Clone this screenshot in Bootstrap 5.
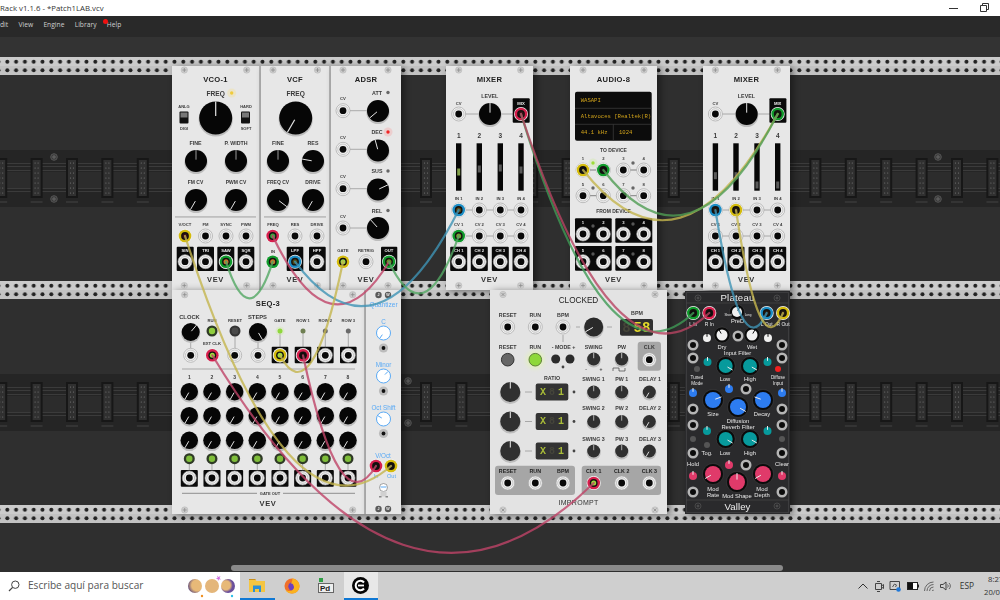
<!DOCTYPE html>
<html lang="en">
<head>
    <meta charset="UTF-8">
    <title>Rack v1.1.6 - *Patch1LAB.vcv</title>
    <link href="https://cdn.jsdelivr.net/npm/bootstrap@5.3.0/dist/css/bootstrap.min.css" rel="stylesheet">
    <style>
        body { background: #2f2f2f; font-family: "Liberation Sans", Arial, sans-serif; }
        .win-title { height: 16px; background: #fff; color: #333; font: 7.8px/16px "Open Sans", sans-serif; }
        .win-btn { width: 31px; }
        .menu-bar { height: 21px; background: #292929; color: #cfcfcf; font: 6.7px/17px "Open Sans", sans-serif; gap: 10.3px; }
        .help-dot { width: 5px; height: 5px; left: 103px; top: 2.5px; background: #f01010; }
        .rack-canvas { background: #2f2f2f; filter: blur(.35px); }
        .rack-top { height: 20px; background: #333; }
        .rack-mod { background: #e7e7e7; color: #222; box-shadow: 3px 1px 7px rgba(0,0,0,.45); }
        .rack-mod.has-edge { border-right: 2px solid #b4b4b4; }
        .rack-mod.is-dark { background: #2a2a2c; color: #eee; outline: 1px solid #3c3c3e; outline-offset: -2px; }
        .rack-mod.is-clocked { background: #e3e3e3; }
        .mod-title { font-size: 7.6px; font-weight: 700; line-height: 12px; margin-top: 8px; letter-spacing: .3px; }
        .is-clocked .mod-title { font-weight: 400; font-size: 8.2px; margin-top: 5px; letter-spacing: 0; }
        .is-dark .mod-title { font-weight: 400; font-size: 9.6px; margin-top: 0; line-height: 13px; letter-spacing: .2px; }
        .is-quant .mod-title { color: #5aaaf5; font-size: 6.5px; font-weight: 400; margin-top: 9px; letter-spacing: 0; }
        .mod-foot { font-size: 7.5px; font-weight: 700; line-height: 10px; margin-bottom: 5px; letter-spacing: .6px; color: #333; }
        .is-dark .mod-foot { color: #eee; font-weight: 400; font-size: 9.6px; line-height: 13px; margin-bottom: 1px; letter-spacing: .1px; }
        .is-clocked .mod-foot { font-weight: 400; font-size: 7px; margin-bottom: 6px; letter-spacing: .3px; }
        .scroll-track { height: 7px; background: #2f2f2f; }
        .scroll-thumb { width: 552px; height: 6px; margin-left: 231px; background: #8a8a8a; }
        .task-bar { height: 28px; background: #cfcfcf; color: #333; font-family: "Open Sans", sans-serif; }
        .search-box { width: 240px; background: #fff; font-size: 10.1px; color: #555; }
        .app-btn { width: 34.5px; height: 28px; }
        .app-btn.is-open { border-bottom: 2px solid #0f78d4; }
        .app-btn.is-active { background: #e8e8e8; }
        .tray-icon { width: 16.6px; }
        .tray-lang { width: 30px; padding-right: 4px; font-size: 8.4px; }
        .tray-clock { width: 16px; font-size: 7.7px; line-height: 13px; white-space: nowrap; }
        svg text { font-family: "Liberation Sans", Arial, sans-serif; }
        svg .mono { font-family: "Liberation Mono", monospace; }
    </style>
</head>
<body class="vh-100 d-flex flex-column overflow-hidden">

    <div class="win-title d-flex justify-content-between flex-shrink-0">
        <span>Rack v1.1.6 - *Patch1LAB.vcv</span>
        <div class="d-flex align-items-center">
            <span class="win-btn d-flex justify-content-center">
                <svg width="10" height="10"><path d="M0 5.5h9" stroke="#333"/></svg>
            </span>
            <span class="win-btn d-flex justify-content-center">
                <svg width="10" height="10"><path d="M.5 2.5h6v6h-6zM2.5 2.5v-2h6v6h-2" stroke="#333" fill="none"/></svg>
            </span>
        </div>
    </div>

    <div class="menu-bar d-flex position-relative flex-shrink-0">
        <span>dit</span><span>View</span><span>Engine</span><span>Library</span><span>Help</span>
        <span class="help-dot position-absolute rounded-circle"></span>
    </div>

    <div id="canvas" class="rack-canvas position-relative flex-grow-1 overflow-hidden">
        <div class="rack-top"></div>
    </div>

    <div class="scroll-track flex-shrink-0"><div class="scroll-thumb rounded-pill"></div></div>

    <div class="task-bar d-flex flex-shrink-0">
        <div class="search-box d-flex align-items-center">
            <svg class="mx-2" width="12" height="12" viewBox="0 0 12 12"><circle cx="7.3" cy="4.7" r="3.7" fill="none" stroke="#444"/><path d="M4.6 7.4 1 11" stroke="#444" stroke-width="1.2"/></svg>
            <span>Escribe aquí para buscar</span>
            <svg class="ms-auto" width="52" height="28" viewBox="0 0 52 28">
                <defs>
                    <radialGradient id="moonA" cx=".65" cy=".45" r=".7"><stop offset=".55" stop-color="#e7b978"/><stop offset="1" stop-color="#52407c"/></radialGradient>
                    <radialGradient id="moonB" cx=".35" cy=".45" r=".7"><stop offset=".45" stop-color="#e7b978"/><stop offset=".7" stop-color="#6a4f9c"/></radialGradient>
                </defs>
                <circle cx="7" cy="14" r="7" fill="url(#moonA)"/>
                <circle cx="24" cy="14" r="7" fill="#e4b67a"/>
                <circle cx="40" cy="14" r="7" fill="url(#moonB)"/>
                <path d="M29 3.5l1.5 1.5 2-1-1 2 1.5 1.5-2-.3-1 1.8-.3-2-2-.5 2-.8z" fill="#d070e0"/>
                <circle cx="14" cy="24" r="1.2" fill="#f09020"/><circle cx="44" cy="24" r="1.2" fill="#30c0e8"/>
            </svg>
        </div>
        <div class="app-btn is-open d-flex align-items-center justify-content-center">
            <svg width="16" height="14" viewBox="0 0 16 14"><path d="M0 1h6l1.5 2H16v11H0z" fill="#f4c542"/><path d="M0 1h6l1 1H0z" fill="#c98f1a"/><path d="M4 7.5h8V14h-2v-3H6v3H4z" fill="#2a8fd8"/></svg>
        </div>
        <div class="app-btn d-flex align-items-center justify-content-center">
            <svg width="16" height="16" viewBox="0 0 16 16"><circle cx="8" cy="8" r="7.5" fill="#f0702a"/><circle cx="8.5" cy="8.5" r="4.2" fill="#6d3fc0"/><path d="M8 .5c5 .5 7.5 4 7.5 7.5 0 4-3 7.5-7.5 7.5-3 0-5.5-1.5-6.8-4 2 1.8 5.5 2 7.3.5 1.5-1 2-3 1-4.5C9 5.500 7.500 5.300 6.500 5.700 8 4 9 2 8 .5z" fill="#fbb21e"/></svg>
        </div>
        <div class="app-btn d-flex align-items-center justify-content-center">
            <svg width="17" height="17" viewBox="0 0 17 17"><rect x="1" y="0" width="4" height="4" fill="#2f9e44"/><rect x=".5" y="5.5" width="15" height="9" fill="#eee" stroke="#666"/><text x="2" y="12.5" font-size="8" font-weight="700" fill="#222">Pd</text></svg>
        </div>
        <div class="app-btn is-open is-active d-flex align-items-center justify-content-center">
            <svg width="17" height="17" viewBox="0 0 17 17"><circle cx="8.5" cy="8.5" r="8.5" fill="#050505"/><path d="M12 5.5A4.7 4.7 0 1 0 12 11.5" fill="none" stroke="#fff" stroke-width="2"/><path d="M6 8.5h6" stroke="#fff" stroke-width="1.8"/></svg>
        </div>
        <div class="ms-auto d-flex align-items-center">
            <span class="tray-icon d-flex justify-content-center"><svg width="10" height="6"><path d="M.5 5.5 5 1l4.500 4.500" fill="none" stroke="#333"/></svg></span>
            <span class="tray-icon d-flex justify-content-center"><svg width="10" height="11"><path d="M1.5 2.5h6v6h-6zM3 .5h3M3 10.5h3M7.5 5l2-1.5v4L7.5 6" fill="none" stroke="#444"/></svg></span>
            <span class="tray-icon d-flex justify-content-center"><svg width="13" height="12"><path d="M1 1.5h9.5v8H1z" fill="none" stroke="#444"/><path d="M3.5 7l2-3 2 1-1 2" fill="none" stroke="#555"/><circle cx="9.5" cy="9.5" r="2.3" fill="#1f78d8"/></svg></span>
            <span class="tray-icon d-flex justify-content-center"><svg width="12" height="8"><rect x=".5" y=".5" width="10" height="7" fill="#fff" stroke="#222"/><rect x="1" y="1" width="5" height="6" fill="#111"/><rect x="10.5" y="2.5" width="1.5" height="3" fill="#222"/></svg></span>
            <span class="tray-icon d-flex justify-content-center"><svg width="12" height="11"><path d="M1.5 10a9 9 0 0 1 9-9M4 10a6.5 6.5 0 0 1 6.5-6.5M6.5 10a4 4 0 0 1 4-4" fill="none" stroke="#666"/><path d="M9 10a1.5 1.5 0 0 1 1.500-1.500V10z" fill="#666"/></svg></span>
            <span class="tray-icon d-flex justify-content-center"><svg width="12" height="10"><path d="M.5 3.500h2.500L6 1v8L3 6.500H.5z" fill="none" stroke="#444"/><path d="M7.500 3.500a2 2 0 0 1 0 3M9 2a4 4 0 0 1 0 6" fill="none" stroke="#666"/></svg></span>
            <span class="tray-lang text-center">ESP</span>
            <span class="tray-clock"><span class="d-block ms-1">8:27</span><span class="d-block">20/0</span></span>
        </div>
    </div>

    <script>
        const canvas = document.getElementById('canvas');
        const TOP = 37;
        const wrap = (body, cls = '') => `<svg class="position-absolute top-0 start-0 ${cls}" width="1000" height="528" viewBox="0 ${TOP} 1000 528">${body}</svg>`;

        // rack background: rails, bands, connectors
        let bg = `<defs><pattern id="holes" width="8.8" height="18" patternUnits="userSpaceOnUse" x="3" y="57">
            <rect width="8.8" height="9" fill="#cbcbcb"/><rect y="9" width="8.8" height="9" fill="#c2c2c2"/>
            <circle cx="4.3" cy="4.7" r="2" fill="#222"/><circle cx="4.3" cy="13.3" r="2" fill="#222"/></pattern></defs>`;
        [57, 281, 505].forEach(y => {
            bg += `<g transform="translate(0 ${y - 57})"><rect x="0" y="57" width="1000" height="18" fill="url(#holes)"/></g>`;
        });
        [150, 374].forEach(y => {
            bg += `<rect x="0" y="${y}" width="1000" height="57" fill="#252525"/>`;
            bg += `<rect x="0" y="${y + 22}" width="1000" height="17" fill="#2c2c2c"/>`;
            [13, 16, 20, 38, 41].forEach(d => bg += `<rect x="0" y="${y + d}" width="1000" height="1" fill="#3b3b3b"/>`);
            for (let x = 1.2; x < 1000; x += 35.4) {
                bg += `<rect x="${x - 6}" y="${y + 8}" width="12" height="40" fill="#171717"/><rect x="${x - 4}" y="${y + 10}" width="8" height="36" fill="#303030"/>`;
                for (let k = 0; k < 7; k++) bg += `<circle cx="${x - 1.5}" cy="${y + 13 + k * 5}" r=".6" fill="#777"/><circle cx="${x + 1.5}" cy="${y + 13 + k * 5}" r=".6" fill="#777"/>`;
                bg += `<rect x="${x - 6}" y="${y + 51.5}" width="12" height="1" fill="#444"/>`;
            }
        });
        const rackScrew = (x, y) => bg += `<circle cx="${x}" cy="${y}" r="3.3" fill="#3a3a3a" stroke="#555"/><path d="M${x - 2} ${y}h4M${x} ${y - 2}v4" stroke="#666"/>`;
        [[54, 157], [54, 199], [938, 157], [938, 199], [408, 381], [408, 423]].forEach(p => rackScrew(...p));
        canvas.insertAdjacentHTML('beforeend', wrap(bg));

        // module panels
        const modules = [
            ['VCO-1', 172, 66, 89, 224, 'has-edge', 'VEV'],
            ['VCF', 261, 66, 70, 224, 'has-edge', 'VEV'],
            ['ADSR', 331, 66, 70, 224, '', 'VEV'],
            ['MIXER', 446, 66, 87, 224, '', 'VEV'],
            ['AUDIO-8', 570, 66, 87, 224, '', 'VEV'],
            ['MIXER', 703, 66, 87, 224, '', 'VEV'],
            ['SEQ-3', 172, 290, 194, 224, 'has-edge', 'VEV'],
            ['Quantizer', 366, 290, 35, 224, 'is-quant', ''],
            ['CLOCKED', 490, 290, 177, 224, 'is-clocked', 'IMPROMPT'],
            ['Plateau', 685, 291, 105, 223, 'is-dark', 'Valley']
        ];
        modules.forEach(([name, x, y, w, h, cls, foot]) => {
            canvas.insertAdjacentHTML('beforeend',
                `<div class="rack-mod ${cls} position-absolute d-flex flex-column justify-content-between text-center" style="left:${x}px;top:${y - TOP}px;width:${w}px;height:${h}px">
                    <div class="mod-title">${name}</div><div class="mod-foot">${foot}</div></div>`);
        });

        // controls on the panels
        let o = '<defs><radialGradient id="runGlow"><stop offset=".4" stop-color="#e3f2b8"/><stop offset="1" stop-color="#e3e3e3" stop-opacity="0"/></radialGradient></defs>';
        const T = (x, y, t, sz = 5.5, c = '#3a3a3a', w = 600) => o += `<text x="${x}" y="${y}" font-size="${sz}" fill="${c}" font-weight="${w}" text-anchor="middle" dominant-baseline="central">${t}</text>`;
        const L = (x1, y1, x2, y2, c = '#9a9a9a', w = 0.8) => o += `<line x1="${x1}" y1="${y1}" x2="${x2}" y2="${y2}" stroke="${c}" stroke-width="${w}"/>`;
        const B = (x1, y1, x2, y2, c = '#0a0a0a', r = 1) => o += `<rect x="${x1}" y="${y1}" width="${x2 - x1}" height="${y2 - y1}" rx="${r}" fill="${c}"/>`;
        const C = (x, y, r, c, extra = '') => o += `<circle cx="${x}" cy="${y}" r="${r}" fill="${c}" ${extra}/>`;
        const screw = (x, y) => { C(x, y, 3.2, '#cdcdcd', 'stroke="#b5b5b5" stroke-width=".5"'); o += `<path d="M${x - 2} ${y}h4M${x} ${y - 2}v4" stroke="#8c8c8c" stroke-width=".8"/>`; };
        const screwX = (x, y) => { C(x, y, 3.2, '#cdcdcd', 'stroke="#b5b5b5" stroke-width=".5"'); o += `<path d="M${x - 1.5} ${y - 1.5}l3 3M${x + 1.5} ${y - 1.5}l-3 3" stroke="#8c8c8c" stroke-width=".8"/>`; };
        const screws = (x1, x2, y1 = 70, y2 = 285.6, f = screw) => [x1, x2].forEach(x => { f(x, y1); f(x, y2); });
        const knob = (x, y, r, a, body = '#060606', line = '#e4e4e4', from = 0.12) => {
            C(x, y + 1.5, r + .6, '#bdbdbd');
            C(x, y, r, body);
            const s = Math.sin(a * Math.PI / 180), c = -Math.cos(a * Math.PI / 180);
            L(x + s * r * from, y + c * r * from, x + s * r, y + c * r, line, r > 12 ? 1.2 : 1);
        };
        const port = (x, y) => {
            C(x, y, 7, '#f3f3f3', 'stroke="#a6a6a6" stroke-width=".7"');
            C(x, y, 5.3, '#efefef', 'stroke="#b4b4b4" stroke-width=".7"');
            C(x, y, 3.4, '#090909');
        };
        const plug = (x, y, col, core = '#111') => {
            C(x, y, 7, '#efefef');
            C(x, y, 6.3, col);
            C(x, y, 3.9, '#14110e');
            C(x, y, 2.5, core);
        };
        const led = (x, y, c, glow) => { if (glow) C(x, y, 4.5, glow, 'opacity=".35"'); C(x, y, 1.7, c); };
        const Y = '#d4bb0c', G = '#0f9a2b', R = '#d61e4c', U = '#1a8cc4';
        const box = (x1, x2, y1, y2) => B(x1, y1, x2, y2);

        // VCO-1
        screws(184.3, 246.7);
        T(215.7, 93, 'FREQ', 6.6); led(231.7, 93, '#f0cb3c', '#f5e08a');
        knob(215.7, 118, 16.5, 0);
        T(184, 106.7, 'ANLG', 4); T(184, 128.5, 'DIGI', 4); T(246, 106.7, 'HARD', 4); T(246, 128.5, 'SOFT', 4);
        [184, 245.5].forEach(x => { B(x - 4.5, 111.5, x + 4.5, 123.5, '#111', 1); B(x - 3.5, 112.5, x + 3.5, 117.5, '#777', 0); });
        T(195.5, 143, 'FINE', 5.3); T(236, 143, 'P. WIDTH', 5.3);
        knob(196, 161, 11, 0, undefined, '#9a9a9a'); knob(236, 161, 11, 0, undefined, '#9a9a9a');
        T(195.5, 181.5, 'FM CV', 5); T(236, 181.5, 'PWM CV', 5);
        knob(196, 200, 11, -150); knob(236, 200, 11, -150);
        B(175, 216, 256, 217.8, '#bfbfbf', 0);
        ['V/OCT', 'FM', 'SYNC', 'PWM'].forEach((t, i) => T([185, 205.5, 226, 246][i], 224.5, t, 4.2));
        plug(185, 236, Y, '#3a0d18'); port(205.5, 236); port(226, 236); port(246, 236);
        [[176.7, 193.7, 'SIN', 185], [197, 214, 'TRI', 205.5], [217.3, 234.3, 'SAW', 226], [237.7, 254.3, 'SQR', 246]].forEach(([a, b, t, x]) => {
            box(a, b, 246.7, 271); T(x, 250.5, t, 4.2, '#eee'); port(x, 261.7);
        });
        plug(226, 261.7, G, '#c9772b');

        // VCF
        screws(273, 317.5);
        T(295.7, 93, 'FREQ', 6.6); knob(295.7, 118, 16.5, -150);
        T(278, 143, 'FINE', 5.3); T(313, 143, 'RES', 5.3);
        knob(278, 161, 11, 0, undefined, '#9a9a9a'); knob(313, 161, 11, -80);
        T(278, 181.5, 'FREQ CV', 5); T(313, 181.5, 'DRIVE', 5);
        knob(278, 200, 11, 127); knob(313, 200, 11, -150);
        B(264, 216, 326, 217.8, '#bfbfbf', 0);
        T(273, 224.5, 'FREQ', 4.2); T(295, 224.5, 'RES', 4.2); T(317, 224.5, 'DRIVE', 4.2);
        plug(272.7, 236, R, '#3ea33f'); port(295, 236); port(317, 236);
        T(273, 251, 'IN', 4.2); plug(272.7, 261.7, G, '#c9772b');
        box(286.7, 303.3, 246.7, 271); box(309, 325.7, 246.7, 271);
        T(295, 250.5, 'LPF', 4.2, '#eee'); T(317, 250.5, 'HPF', 4.2, '#eee');
        plug(295, 261.7, U, '#514a12'); port(317, 261.7);

        // ADSR
        screws(343, 388);
        [['ATT', 92.5, '#666'], ['DEC', 132, '#f02424'], ['SUS', 171, '#666'], ['REL', 210.5, '#666']].forEach(([t, y, c]) => { T(377, y, t, 5.3); led(388, y, c, c[1] == 'f' ? '#f5a0a0' : null); });
        [[110.7, 111, -130], [149.3, 150.5, -15], [188.7, 189.5, 65], [228, 228, -42]].forEach(([py, ky, a]) => {
            T(343, py - 12, 'CV', 4.2); L(343, py, 378, py); port(343, py); knob(378, ky, 11, a);
        });
        T(343, 250.5, 'GATE', 4.2); T(366, 250.5, 'RETRIG', 4.2);
        box(381, 397.3, 246.7, 271); T(389, 250.5, 'OUT', 4.2, '#eee');
        plug(343, 261.7, Y, '#9ed64c'); port(366, 261.7); plug(389, 261.7, G, '#6c8e22');

        // MIXER, both copies
        const mixer = (dx, handles, plugs) => {
            const xs = [458.7, 479.3, 500.3, 521].map(v => v + dx);
            screws(458.7 + dx, 520.7 + dx);
            T(489.7 + dx, 96, 'LEVEL', 5.3); T(458.7 + dx, 103, 'CV', 4.2);
            L(xs[0], 114, xs[3], 114);
            port(xs[0], 114); knob(490 + dx, 114, 11, 0);
            box(512.7 + dx, 529.7 + dx, 98.3, 122.7); T(xs[3], 103, 'MIX', 4.2, '#eee');
            xs.forEach((x, i) => {
                T(x, 135.7, i + 1, 6.5);
                B(x - 2.7, 143.3, x + 2.7, 190.7, '#070707', 0);
                B(x - 1.5, handles[i] - 3.5, x + 1.5, handles[i] + 3.5, handles[i] === 172 ? '#82a04a' : '#595959', 0);
                T(x, 198, 'IN ' + (i + 1), 4.2); T(x, 224.3, 'CV ' + (i + 1), 4.2);
                if (i < 3) { L(x, 210, xs[i + 1], 210); L(x, 236, xs[i + 1], 236); }
            });
            xs.forEach((x, i) => {
                port(x, 210); port(x, 236);
                box(x - 8.5, x + 8.5, 246.7, 271); T(x, 250.5, 'CH ' + (i + 1), 4.2, '#eee'); port(x, 261.7);
            });
            plugs();
        };
        mixer(0, [172, 169, 168, 170], () => { plug(521, 114, R, '#3a0d18'); plug(458.7, 210, U, '#5e4a14'); plug(458.7, 236, G, '#7c9c34'); });
        mixer(256.7, [175.7, 175.7, 185, 185], () => { plug(777.7, 114, G, '#0b1a0b'); plug(715.4, 210, U, '#241a10'); plug(736, 210, Y, '#241a10'); });

        // AUDIO-8
        screws(583, 644);
        B(575, 91.7, 651.7, 140.7, '#0c0c0c', 2);
        L(575, 108.3, 651.7, 108.3, '#3a3a3a'); L(575, 124.3, 651.7, 124.3, '#3a3a3a'); L(613.3, 124.3, 613.3, 140.7, '#3a3a3a');
        const disp = (x, y, t) => o += `<text class="mono" x="${x}" y="${y}" font-size="5.6" fill="#d0a21a" dominant-baseline="central">${t}</text>`;
        disp(580.7, 100, 'WASAPI'); disp(580.7, 116.7, 'Altavoces [Realtek(R)'); disp(580.7, 132.7, '44.1 kHz'); disp(619, 132.7, '1024');
        T(613.5, 149.5, 'TO DEVICE', 5);
        const ax = [583, 603.3, 623.3, 643.7];
        ax.forEach((x, i) => { T(x, 158, i + 1, 4.2); T(x, 184, i + 5, 4.2); });
        L(583, 170, 603, 170, '#666'); L(623, 170, 644, 170, '#666'); L(583, 195.7, 603, 195.7, '#666'); L(623, 195.7, 644, 195.7, '#666');
        ax.forEach(x => { port(x, 170); port(x, 195.7); });
        plug(583, 170, Y); plug(603.3, 170, G);
        led(593, 163, '#9edc3a', '#cdeaa0'); led(633, 163, '#666'); led(593, 188, '#666'); led(633, 188, '#666');
        T(613.5, 211, 'FROM DEVICE', 5);
        [[575, 611.7], [615.3, 652.3]].forEach(([a, b]) => {
            box(a, b, 218.3, 242.7); box(a, b, 246, 270.7);
        });
        ax.forEach((x, i) => {
            T(x, 222.5, i + 1, 4.2, '#eee'); T(x, 250.5, i + 5, 4.2, '#eee');
            port(x, 234); port(x, 261.7);
        });
        [[593, 226], [633, 224], [593, 254], [633, 254]].forEach(p => led(...p, '#555'));

        // SEQ-3
        screws(184.7, 352.7, 294.7, 510);
        T(189.5, 317, 'CLOCK', 5.8); T(212, 320, 'RUN', 4.2); T(235, 320, 'RESET', 4.2); T(257.5, 317, 'STEPS', 5.8);
        T(212, 343.3, 'EXT CLK', 4.2);
        L(190.7, 332, 190.7, 355); L(235, 331, 235, 355); L(258, 332, 258, 355);
        knob(190.7, 332, 9, 40); knob(258, 332, 9, 150);
        port(190.7, 355.3); port(234.7, 355.3); port(258, 355.3);
        C(212, 331, 5.5, '#2f3a26'); C(212, 331, 3.2, '#8fce3e');
        C(235, 331, 5.5, '#333'); C(235, 331, 3.4, '#4a4a4a');
        plug(212.3, 355.3, R, '#9edc3a');
        [['GATE', 280, '#8fd83c', '#cfeaa0'], ['ROW 1', 303, '#6f7f52'], ['ROW 2', 325.3, '#6a6a6a'], ['ROW 3', 348.3, '#6a6a6a']].forEach(([t, x, c, g]) => {
            T(x, 320, t, 4.2); L(x, 331, x, 350); led(x, 331, c, g); C(x, 331, 2.5, c);
            box(x - 8.3, x + 8.3, 346.7, 363.3); port(x, 355.3);
        });
        plug(280, 355.3, Y, '#9edc3a'); plug(303, 355.3, R, '#12090a');
        B(182, 368.5, 355, 369.5, '#a8a8a8', 0);
        for (let i = 0; i < 8; i++) {
            const x = 189.3 + i * 22.67;
            T(x, 377, i + 1, 5);
            [391.7, 415.7, 440.3].forEach(y => knob(x, y, 8.7, -150));
            L(x, 459, x, 470);
            C(x, 458.7, 5.5, '#2f3a26'); C(x, 458.7, 3.2, '#7fbe3a');
            box(x - 8.5, x + 8.5, 470, 486.7); port(x, 478);
        }
        L(182, 493.3, 257, 493.3, '#777'); L(283, 493.3, 355, 493.3, '#777'); T(270, 493.3, 'GATE OUT', 4);

        // Quantizer
        [[378.5, 295, 'J'], [388, 295, 'W'], [378.5, 509, 'J'], [388, 509, 'W']].forEach(([x, y, t]) => { C(x, y, 3.2, '#5a5a5a'); T(x, y, t, 3.6, '#eee'); });
        const qBlue = '#5aaaf5';
        [['C', 321, 333, -145, 348], ['Minor', 364, 376, 45, 391], ['Oct Shift', 407.5, 419, -60, 433.5]].forEach(([t, ly, ky, a, py]) => {
            T(383.5, ly, t, 6.3, qBlue, 400);
            C(383.5, ky, 7, '#fff', `stroke="${qBlue}" stroke-width="1"`);
            const s = Math.sin(a * Math.PI / 180), c = -Math.cos(a * Math.PI / 180);
            L(383.5 + s * 2, ky + c * 2, 383.5 + s * 6.5, ky + c * 6.5, qBlue, 1);
            C(383.5, py, 4.6, '#bcbcbc'); C(383.5, py, 1.9, '#111');
        });
        T(383, 455, 'V/Oct', 6.3, qBlue, 400);
        T(376, 475.5, 'In', 5.7, qBlue, 400); T(391.5, 475.5, 'Out', 5.7, qBlue, 400);
        plug(376, 466, R); plug(391, 466, Y);
        C(383.5, 487.5, 4, '#fff', `stroke="#666" stroke-width=".6"`); L(380.5, 487, 386.5, 487, qBlue, 1);
        B(380.5, 491.5, 386.5, 496.5, '#d0d0d0', 1); B(379, 496, 381.5, 497.5, '#888', 0); B(385.5, 496, 388, 497.5, '#888', 0);

        // CLOCKED
        screws(503, 655, 294.5, 510, screwX);
        C(535.3, 359.7, 14, 'url(#runGlow)');
        [['RESET', 507.7], ['RUN', 535.3], ['BPM', 563]].forEach(([t, x]) => { T(x, 314.5, t, 5.3); port(x, 327); });
        T(507.7, 347, 'RESET', 5.3); T(535.3, 347, 'RUN', 5.3);
        L(563, 335, 563, 342); L(576, 327, 580, 327, '#999'); L(607, 327, 612, 327, '#999');
        knob(593.7, 327, 9.5, -120, '#2a2a2a', '#eee', 0.1);
        T(637, 313, 'BPM', 5.3);
        B(620, 319, 653, 335.7, '#2f2f2f', 2);
        const seg = (x, y, t, sz, c) => o += `<text class="mono" x="${x}" y="${y}" font-size="${sz}" font-weight="700" fill="${c}" text-anchor="middle" dominant-baseline="central">${t}</text>`;
        seg(626.5, 327.5, '8', 14, '#454538'); seg(642, 327.5, '58', 14, '#e4d92a');
        T(563.5, 347, '- MODE +', 5.3); T(593.7, 347, 'SWING', 5.3); T(621.7, 347, 'PW', 5.3);
        C(507.7, 359.7, 6.3, '#666', 'stroke="#333"');
        C(535.3, 359.7, 6.3, '#8ed83a', 'stroke="#5f7f3a"');
        C(555.7, 359, 4.5, '#2b2b2b'); C(570, 359, 4.5, '#2b2b2b'); C(563, 367, 1.4, '#444');
        knob(593.7, 359, 6.5, 0, '#303030', '#bbb'); knob(621.7, 359, 6.5, 0, '#303030', '#bbb');
        T(586, 369, '-', 5); T(601, 369, '+', 5);
        o += `<path d="M613 371v-3h6v3h6v-3" fill="none" stroke="#444" stroke-width=".7"/>`;
        B(637.7, 341.7, 661, 370.7, '#a6a6a6', 3); T(649.3, 347, 'CLK', 5.3); port(649.3, 359.7);
        T(552, 377.5, 'RATIO', 5.3);
        [[392, 1, 379], [421.5, 2, 408], [451, 3, 438.5]].forEach(([y, n, ly]) => {
            knob(510.3, y, 10, 0, '#303030', '#eee', 0.35);
            L(525, y, 532, y, '#999');
            B(535.7, y - 8.5, 568.3, y + 8.5, '#333', 2);
            seg(552, y, '8', 10, '#45453a'); seg(543, y, 'X', 10, '#a8bb38'); seg(561, y, '1', 10, '#a8bb38');
            C(574, y, 1.4, '#444');
            T(593.5, ly, 'SWING ' + n, 5.3); T(621.7, ly, 'PW ' + n, 5.3); T(650, ly, 'DELAY ' + n, 5.3);
            knob(593.7, y, 6.5, 0, '#303030', '#aaa'); knob(621.7, y, 6.5, 0, '#303030', '#aaa'); knob(649.3, y, 6.5, -150, '#303030', '#ddd');
        });
        B(495, 465.7, 575, 495, '#a6a6a6', 3); B(581.7, 465.7, 661, 495, '#a6a6a6', 3);
        [['RESET', 507.7], ['RUN', 535.3], ['BPM', 563], ['CLK 1', 593.7], ['CLK 2', 621.7], ['CLK 3', 649.3]].forEach(([t, x]) => { T(x, 471, t, 5.3, '#222'); port(x, 483); });
        plug(593.7, 483, R, '#9edc3a');

        // Plateau
        const W = '#f0f0f0', TE = '#079a9c', BL = '#2d7cf0', PK = '#e03a6a';
        const P = (x, y) => { C(x, y, 5.5, '#b5b5b5'); C(x, y, 3, '#0b0b0b'); };
        const pk = (x, y, r, c, a, ring = true) => {
            if (ring) C(x, y, r + 2.5, '#0b0b0b', `stroke="#555" stroke-width=".4"`);
            C(x, y, r, c);
            const s = Math.sin(a * Math.PI / 180), k = -Math.cos(a * Math.PI / 180);
            L(x + s * r * .3, y + k * r * .3, x + s * (r + 1), y + k * (r + 1), c === W ? '#111' : '#eee', 1);
        };
        const dl = (x, y, t, sz = 5.8) => T(x, y, t, sz, '#e8e8e8', 400);
        [[698, 298], [777, 298], [698, 506], [777, 506]].forEach(([x, y]) => { C(x, y, 3, '#2a2a2c', 'stroke="#666" stroke-width=".5"'); o += `<path d="M${x - 1.5} ${y}h3M${x} ${y - 1.5}v3" stroke="#777" stroke-width=".5"/>`; });
        L(686, 303, 789, 303, '#444'); L(686, 500, 789, 500, '#444');
        plug(693.3, 313, G, '#0c0c0c'); plug(709.3, 313, R, '#0c0c0c');
        plug(766.7, 313, U, '#241a10'); plug(783, 313, Y, '#241a10');
        dl(693.3, 324, 'L In', 5); dl(709.3, 324, 'R In', 5); dl(766.7, 323.5, 'L Out', 5); dl(783, 323.5, 'R Out', 5);
        pk(737, 312, 5, W, 30); dl(728, 315, 'Short', 3); dl(748, 315, 'Long', 3); dl(737.5, 320.5, 'PreD');
        P(738, 336);
        pk(722, 335, 5.5, W, -30); pk(752, 335, 5.5, W, 30); pk(707, 338, 4, W, 0, false); pk(768, 338, 4, W, 0, false);
        dl(722, 347, 'Dry'); dl(752, 347, 'Wet'); dl(737.5, 352.5, 'Input Filter');
        [345, 358, 409, 425, 453, 492].forEach(y => { P(693, y); P(782, y); });
        pk(707.5, 362, 4, TE, 0, false); pk(767.5, 362, 4, TE, 0, false);
        pk(725.7, 366, 7, TE, 120); pk(750, 366, 7, TE, 120);
        dl(725, 379, 'Low'); dl(750, 379, 'High');
        C(697, 369, 3, '#555'); C(778, 369, 3, '#f02020');
        dl(697, 377.5, 'Tuned', 4.6); dl(697, 383, 'Mode', 4.6); dl(778, 377.5, 'Diffuse', 4.6); dl(778, 383, 'Input', 4.6);
        pk(693, 393, 4, BL, 0, false); pk(782, 393, 4, BL, 0, false);
        pk(713, 400, 8, BL, 70); pk(763, 400, 8, BL, -70); pk(729, 389, 4, BL, 0, false); P(746, 389); pk(738, 407, 8, BL, 120);
        dl(713, 414, 'Size'); dl(762, 414, 'Decay'); dl(738, 421, 'Diffusion'); dl(738, 427, 'Reverb Filter');
        pk(707, 431, 4, TE, 0, false); pk(767.5, 431, 4, TE, 0, false);
        pk(725.7, 439, 7, TE, 120); pk(750, 439, 7, TE, 120);
        dl(725, 453, 'Low'); dl(750, 453, 'High'); dl(707, 453, 'Tog.');
        C(693, 439, 3, '#555'); C(707, 445, 3, '#555'); C(782, 439, 3, '#555');
        dl(693, 464, 'Hold'); dl(782, 464, 'Clear');
        pk(693, 476, 4, PK, 0, false); pk(782, 476, 4, PK, 0, false);
        pk(713, 474, 8, PK, -120); pk(763, 474, 8, PK, -120); pk(729, 465, 4, PK, 0, false); P(746, 465); pk(737, 482, 8, PK, 0);
        dl(713, 489, 'Mod'); dl(713, 495, 'Rate'); dl(762, 489, 'Mod'); dl(762, 495, 'Depth'); dl(737, 496, 'Mod Shape');

        canvas.insertAdjacentHTML('beforeend', wrap(o));

        // cables: quadratic sag, same formula as the app draws them
        const cables = [
            [185, 236, 391, 466, '#c4b54e'],
            [226, 261.7, 272.7, 261.7, '#52a763'],
            [272.7, 236, 389, 261.7, '#bf4468'],
            [295, 261.7, 458.7, 210, '#3f93b5'],
            [280, 355.3, 343, 261.7, '#c4b54e'],
            [389, 261.7, 458.7, 236, '#52a763'],
            [212.3, 355.3, 593.7, 483, '#bf4468'],
            [303, 355.3, 376, 466, '#bf4468'],
            [521, 114, 693.3, 313, '#3f9a55'],
            [521, 114, 709.3, 313, '#b84462'],
            [583, 170, 777.7, 114, '#c4b54e'],
            [603.3, 170, 777.7, 114, '#4f9c52'],
            [715.4, 210, 766.7, 313, '#3f93b5'],
            [736, 210, 783, 313, '#c4b54e']
        ];
        let c = '';
        cables.forEach(([x1, y1, x2, y2, col]) => {
            const dist = Math.hypot(x2 - x1, y2 - y1);
            const cy = (y1 + y2) / 2 + (100 + dist) / 2;
            c += `<path d="M${x1} ${y1}Q${(x1 + x2) / 2} ${cy} ${x2} ${y2}" fill="none" stroke="${col}" stroke-width="2.2" stroke-opacity=".8" stroke-linecap="round"/>`;
        });
        canvas.insertAdjacentHTML('beforeend', wrap(c, 'pe-none'));
    </script>
    <script src="https://cdn.jsdelivr.net/npm/bootstrap@5.3.0/dist/js/bootstrap.bundle.min.js"></script>
</body>
</html>
